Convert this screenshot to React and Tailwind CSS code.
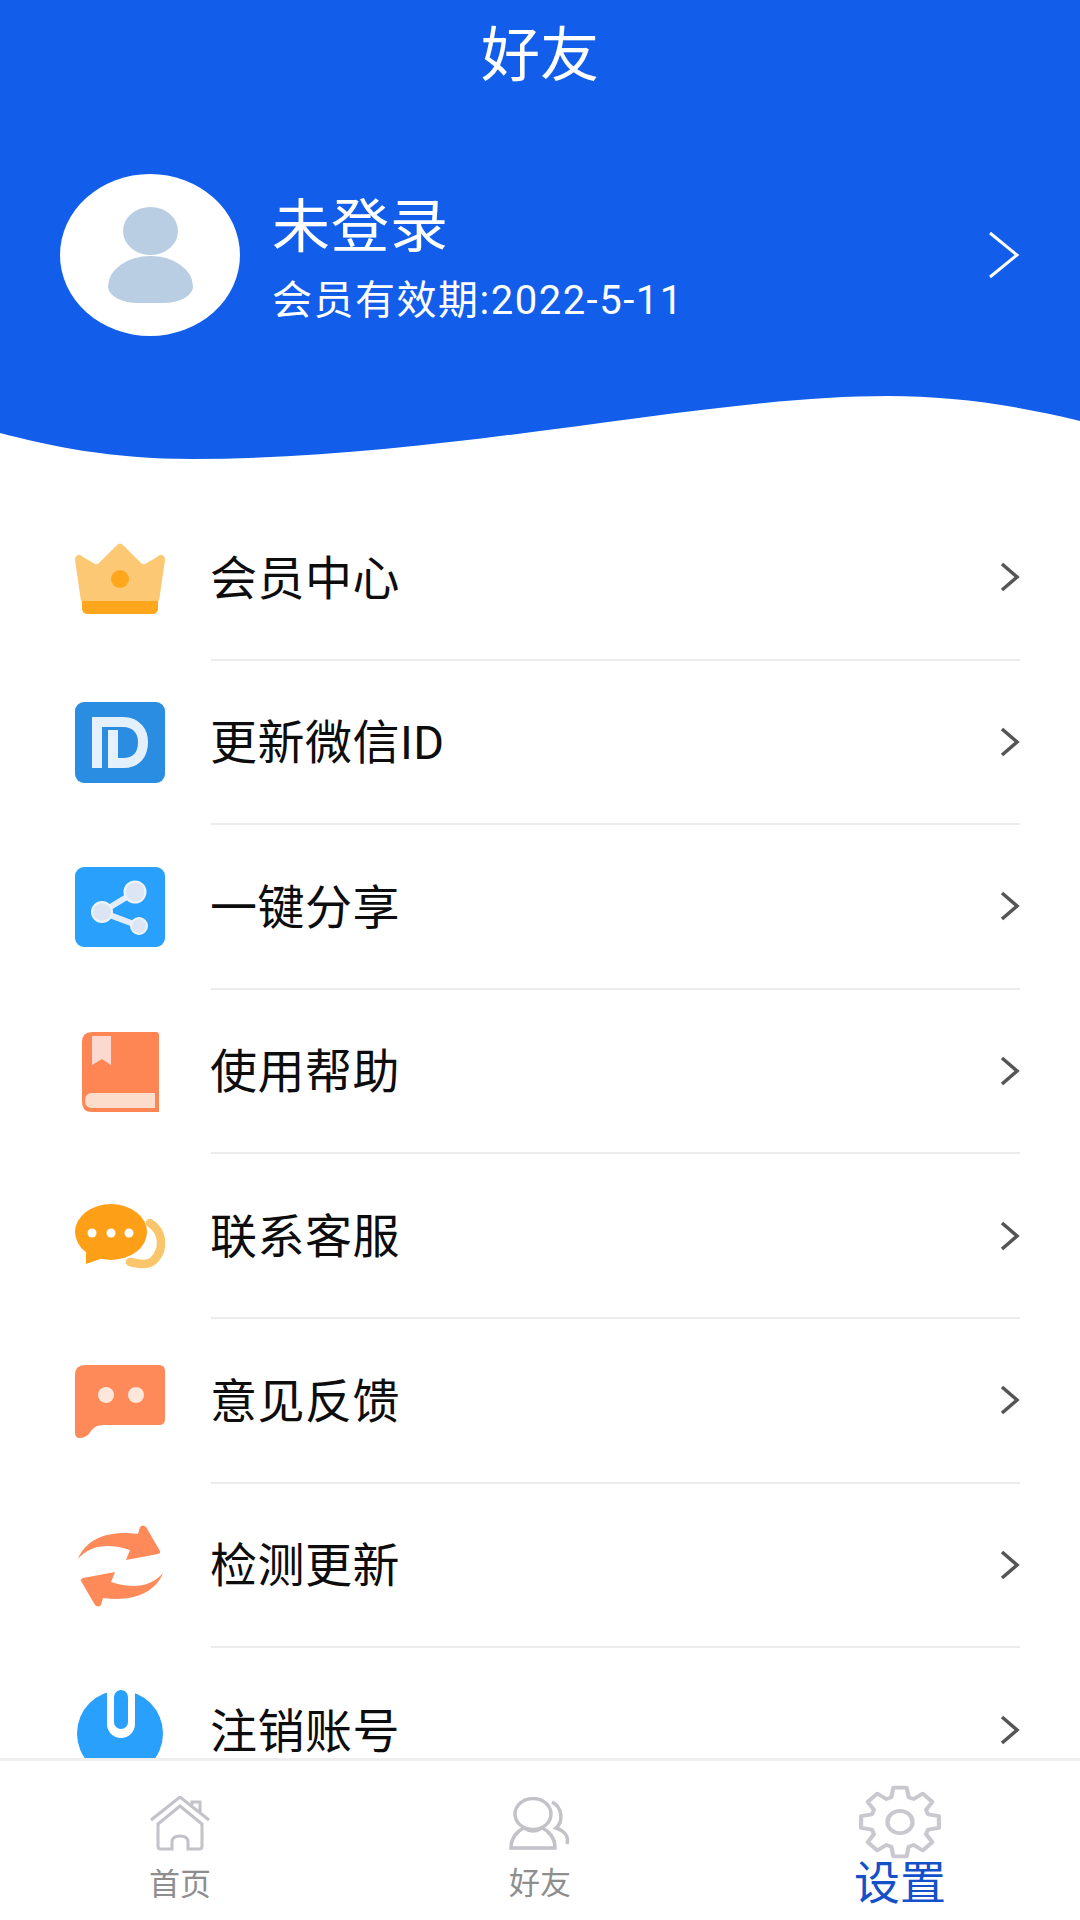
import React from "react";

const FONT = "font-['Roboto','Noto_Sans_CJK_SC','Noto_Sans_CJK_JP',sans-serif]";

function gearPath() {
  const pts = [];
  const cx = 50, cy = 50;
  for (let i = 0; i < 8; i++) {
    const a = (i * Math.PI) / 4 - Math.PI / 2;
    const add = (r, d) => {
      const t = a + d;
      pts.push(`${(cx + r * Math.cos(t)).toFixed(2)} ${(cy + r * Math.sin(t)).toFixed(2)}`);
    };
    add(35, -0.3);
    add(47, -0.17);
    add(47, 0.17);
    add(35, 0.3);
  }
  return "M" + pts.join(" L") + " Z";
}

const Crown = () => (
  <svg width="90" height="71" viewBox="0 0 90 71">
    <path d="M3 12 Q5 11 8 14 L20 21 Q22 22 24 20 L41 3 Q45 -2 49 3 L66 20 Q68 22 70 21 L82 14 Q85 11 87 12 Q90 13 90 17 L84 58 H6 L0 17 Q0 13 3 12 Z" fill="#fdc873" />
    <path d="M7 58 H83 V65 Q83 71 77 71 H13 Q7 71 7 65 Z" fill="#fea71c" />
    <circle cx="45" cy="36" r="9" fill="#fea71c" />
  </svg>
);

const IdIcon = () => (
  <svg width="90" height="81" viewBox="0 0 90 81">
    <rect width="90" height="81" rx="9" fill="#2a8de2" />
    <rect x="17" y="15" width="10" height="51" fill="#e4f0fb" />
    <path d="M17 20 H48 C62 20 68 30 68 40 C68 52 62 61 48 61 H38 V28" fill="none" stroke="#e4f0fb" strokeWidth="10" />
  </svg>
);

const ShareIcon = () => (
  <svg width="90" height="80" viewBox="0 0 90 80">
    <rect width="90" height="80" rx="9" fill="#29a0fc" />
    <path d="M60 25 L27 45 L64 59" fill="none" stroke="#e3ecf7" strokeWidth="6" />
    <circle cx="60" cy="25" r="10.5" fill="#dbe5f3" stroke="#eef4fb" strokeWidth="2" />
    <circle cx="27" cy="45" r="10" fill="#dbe5f3" stroke="#eef4fb" strokeWidth="2" />
    <circle cx="64" cy="59" r="8" fill="#dbe5f3" stroke="#eef4fb" strokeWidth="2" />
  </svg>
);

const BookIcon = () => (
  <svg width="77" height="80" viewBox="0 0 77 80">
    <path d="M10 0 H74 Q77 0 77 3 V80 H10 Q0 80 0 70 V10 Q0 0 10 0 Z" fill="#fe8554" />
    <path d="M10 61 H73 V76 H10 Q3 76 3 68.5 Q3 61 10 61 Z" fill="#fcdccb" />
    <path d="M10 4 H29 V33 L20 27 L10 33 Z" fill="#fbd9d0" />
  </svg>
);

const ChatIcon = () => (
  <svg width="90" height="66" viewBox="0 0 90 66">
    <path d="M75 19 C89 28 89 46 79 56 C73 62 64 60 55 58" fill="none" stroke="#fbc56b" strokeWidth="8.5" strokeLinecap="round" />
    <ellipse cx="36" cy="28" rx="36" ry="28" fill="#fd9f17" />
    <path d="M11 48 L11 60 L28 54 Z" fill="#fd9f17" />
    <circle cx="17" cy="29" r="4.5" fill="#fff" />
    <circle cx="36" cy="29" r="4.5" fill="#fff" />
    <circle cx="54" cy="29" r="4.5" fill="#fff" />
  </svg>
);

const FeedbackIcon = () => (
  <svg width="90" height="73" viewBox="0 0 90 73">
    <path d="M10 0 H84 Q90 0 90 6 V54 Q90 60 84 60 H28 Q20 60 16 66 Q12 73 5 73 Q0 73 0 68 V10 Q0 0 10 0 Z" fill="#fe8a5a" />
    <circle cx="31" cy="30" r="8" fill="#fde6da" />
    <circle cx="61" cy="30" r="8" fill="#fde6da" />
  </svg>
);

const RefreshIcon = () => {
  const d = "M0 34 C8 14 30 5 60 9 L62 2 Q65 -1 68 2 L82 26 Q83 28 80 29 L48 35 L52 25 C30 18 12 20 0 34 Z";
  return (
    <svg width="85" height="82" viewBox="0 0 85 82">
      <path d={d} fill="#fe8a5a" />
      <path d={d} fill="#fe8a5a" transform="rotate(180 42.5 41)" />
    </svg>
  );
};

const PowerIcon = () => (
  <svg width="86" height="86" viewBox="0 0 86 86">
    <circle cx="43" cy="46.5" r="43" fill="#29a0fc" />
    <rect x="30" y="-10" width="28" height="61" rx="14" fill="#fff" />
    <rect x="37" y="3" width="14" height="39" rx="7" fill="#29a0fc" />
  </svg>
);

const Chevron = () => (
  <svg width="20" height="30" viewBox="0 0 20 30" className="shrink-0">
    <path d="M2 2 L17 15 L2 28" fill="none" stroke="#555" strokeWidth="3.5" />
  </svg>
);

const items = [
  ["会员中心", <Crown />],
  ["更新微信ID", <IdIcon />],
  ["一键分享", <ShareIcon />],
  ["使用帮助", <BookIcon />],
  ["联系客服", <ChatIcon />],
  ["意见反馈", <FeedbackIcon />],
  ["检测更新", <RefreshIcon />],
  ["注销账号", <PowerIcon />],
];

export default function App() {
  return (
    <div className={`${FONT} flex h-[1920px] w-[1080px] flex-col overflow-hidden bg-white`}>
      <header className="h-[396px] shrink-0 bg-[#125eea] text-white">
        <h1 className="pt-[21px] text-center text-[59px] leading-[70px] font-normal">好友</h1>
        <div className="mt-[83px] flex items-center pl-[60px] pr-[60px]">
          <div className="flex h-[162px] w-[180px] shrink-0 flex-col items-center justify-center gap-[1px] rounded-[50%] bg-white">
            <div className="h-[48px] w-[55px] rounded-[50%] bg-[#b9cde3]" />
            <div className="h-[47px] w-[85px] rounded-[50%_50%_35%_35%/65%_65%_35%_35%] bg-[#b9cde3]" />
          </div>
          <div className="ml-[32px] flex-1 self-start pt-[18px]">
            <div className="text-[58px] leading-[70px] tracking-[1px]">未登录</div>
            <div className="mt-[16px] text-[40px] leading-[46px] tracking-[1.5px]">会员有效期:2022-5-11</div>
          </div>
          <svg width="32" height="48" viewBox="0 0 32 48" className="shrink-0">
            <path d="M2 2 L29 24 L2 46" fill="none" stroke="#fff" strokeWidth="3" />
          </svg>
        </div>
      </header>
      <svg width="1080" height="64" viewBox="0 0 1080 64" className="block shrink-0">
        <path d="M0 0 H1080 V25 C1010 8 950 0 888 0 C700 0 450 63 193 63 C110 63 50 50 0 37 Z" fill="#125eea" />
      </svg>
      <main className="min-h-0 flex-1 overflow-hidden pt-[36px]">
        {items.map(([label, icon], i) => (
          <div key={label} className="flex h-[164.6px] items-stretch pl-[75px] pr-[60px]">
            <div className="flex w-[90px] shrink-0 items-center justify-center">{icon}</div>
            <div className={`ml-[46px] flex flex-1 items-center justify-between ${i < 7 ? "border-b-2 border-[#ececec]" : ""}`}>
              <span className="-ml-[1px] pt-[3px] text-[47px] tracking-[0.5px] text-[#0d0d0d]">{label}</span>
              <Chevron />
            </div>
          </div>
        ))}
      </main>
      <nav className="grid h-[162px] shrink-0 grid-cols-3 border-t-[3px] border-[#eeeeee] bg-white">
        <div className="flex flex-col items-center pt-[35px]">
          <svg width="60" height="55" viewBox="0 0 60 55" fill="none" stroke="#c2c2c8" strokeWidth="3">
            <path d="M1 24 L30 1 L59 24" />
            <path d="M8 28 L30 10 L52 28 V50 Q52 53 49 53 H38 V46 Q38 40 30 40 Q22 40 22 46 V53 H11 Q8 53 8 50 Z" />
            <path d="M42 9 V6 H50 V16" />
          </svg>
          <span className="mt-[16px] text-[31px] leading-[36px] text-[#8e8e8e]">首页</span>
        </div>
        <div className="flex flex-col items-center pt-[36px]">
          <svg width="62" height="53" viewBox="0 0 62 53" fill="none" stroke="#c2c2c8" strokeWidth="3.5">
            <ellipse cx="24" cy="17" rx="18" ry="15.5" />
            <path d="M2 51 C2 41 8 34 15 31 Q24 37 33 31 C40 34 46 41 46 51 Z" />
            <path d="M43 5 C53 10 55 24 47 31 C56 34 60 40 58 47" />
          </svg>
          <span className="mt-[16px] text-[31px] leading-[36px] text-[#8e8e8e]">好友</span>
        </div>
        <div className="flex flex-col items-center pt-[24px]">
          <svg width="84" height="74" viewBox="0 0 100 100" preserveAspectRatio="none" fill="none" stroke="#c8c8ce" strokeWidth="5" strokeLinejoin="round">
            <path d={gearPath()} />
            <circle cx="50" cy="50" r="15" />
          </svg>
          <span className="text-[46px] leading-[48px] text-[#1450c8]">设置</span>
        </div>
      </nav>
    </div>
  );
}
